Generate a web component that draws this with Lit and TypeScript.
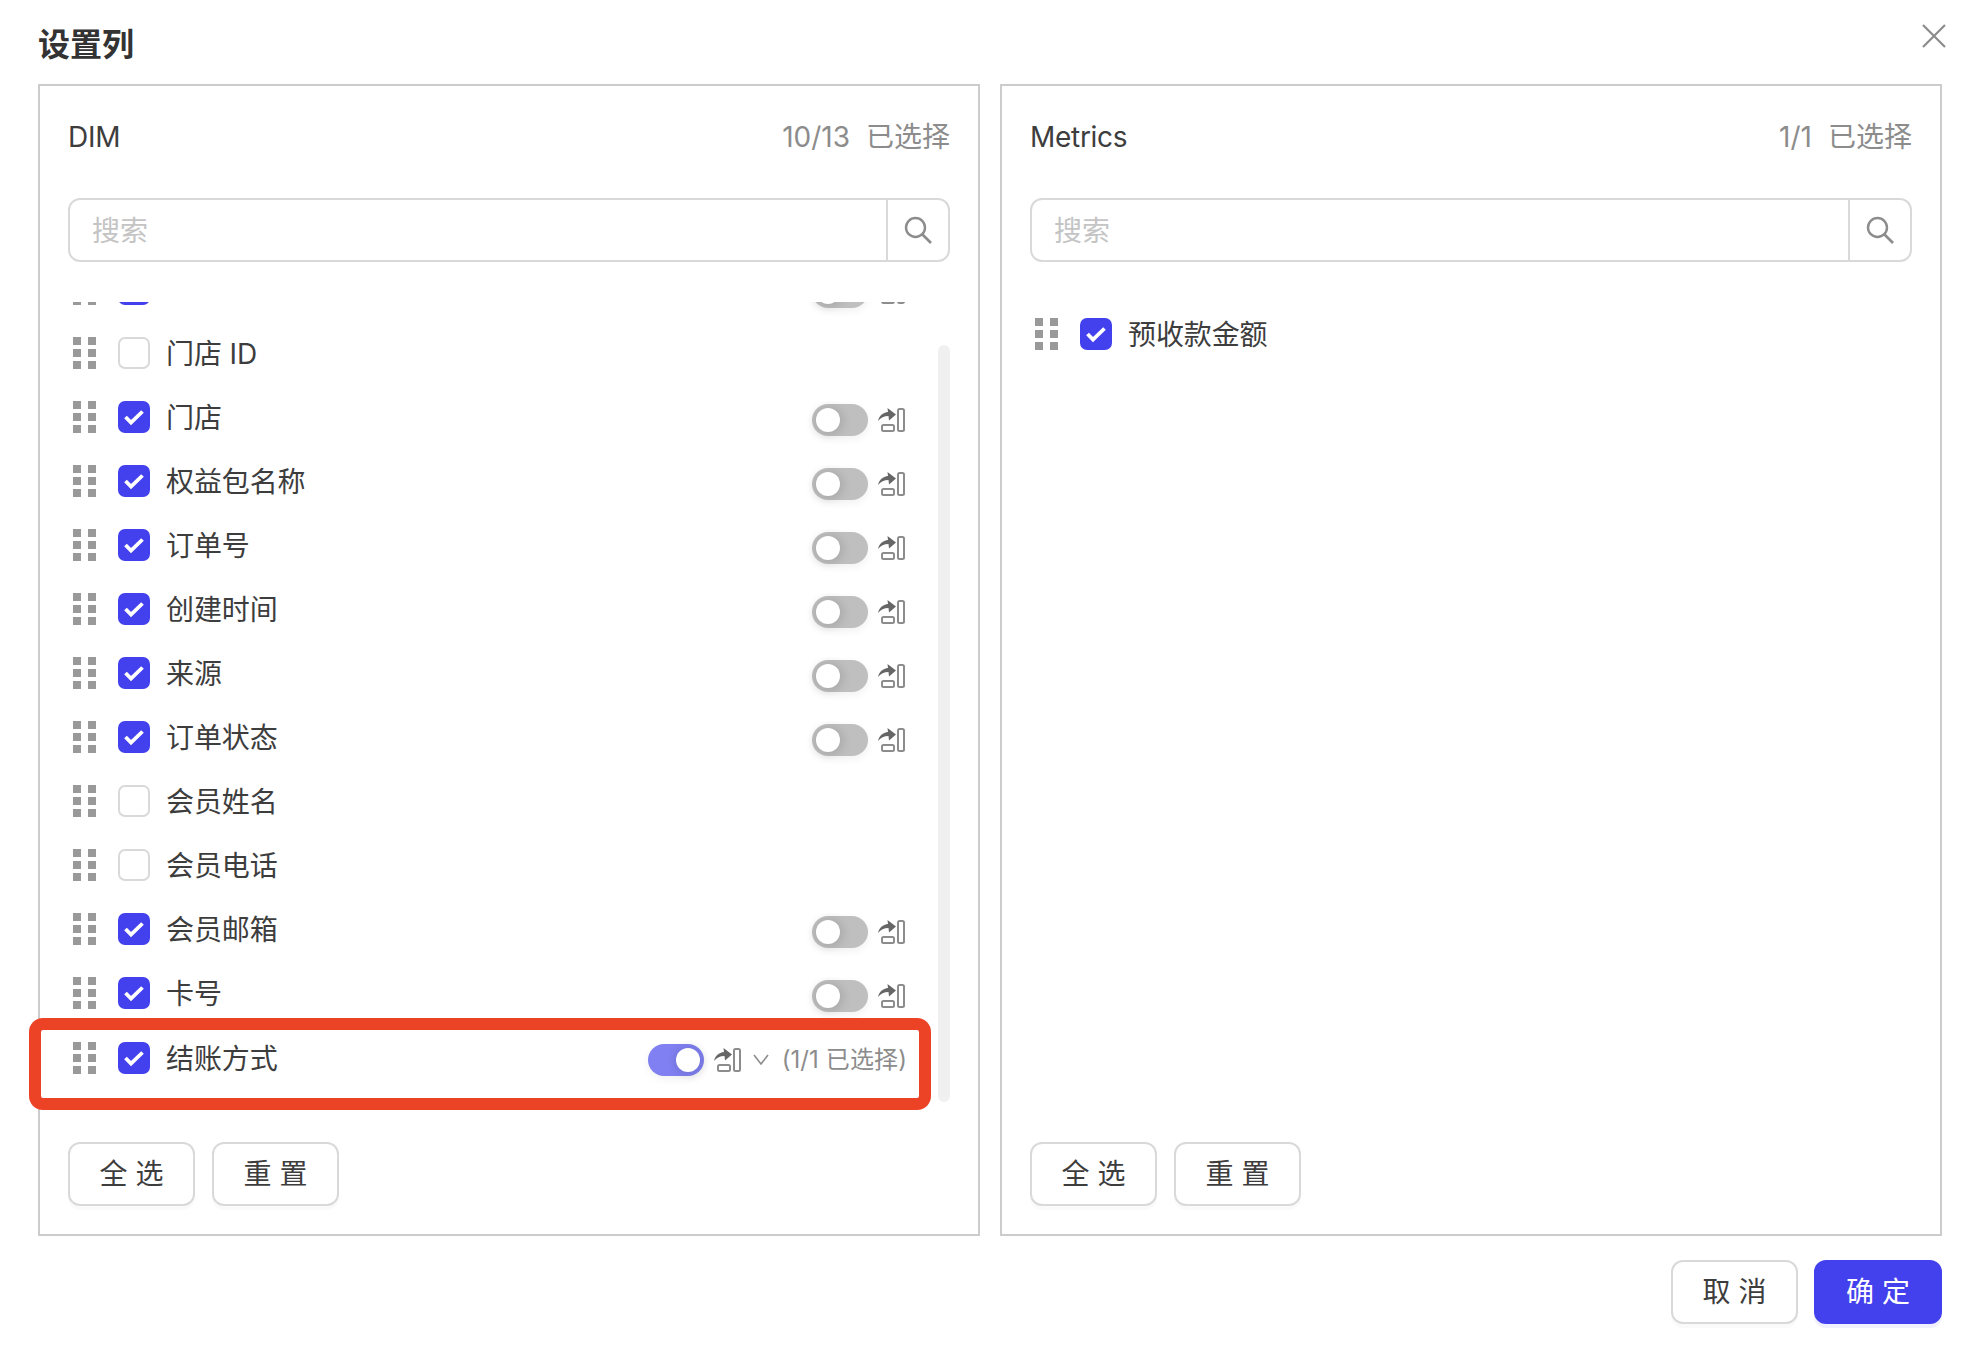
import { LitElement, html, css, svg } from "lit";
import { customElement } from "lit/decorators.js";

type Row = { label: string; checked: boolean; toggle?: boolean; on?: boolean; note?: string };

const DIM: Row[] = [
  { label: "", checked: true, toggle: true },
  { label: "门店 ID", checked: false },
  { label: "门店", checked: true, toggle: true },
  { label: "权益包名称", checked: true, toggle: true },
  { label: "订单号", checked: true, toggle: true },
  { label: "创建时间", checked: true, toggle: true },
  { label: "来源", checked: true, toggle: true },
  { label: "订单状态", checked: true, toggle: true },
  { label: "会员姓名", checked: false },
  { label: "会员电话", checked: false },
  { label: "会员邮箱", checked: true, toggle: true },
  { label: "卡号", checked: true, toggle: true },
  { label: "结账方式", checked: true, toggle: true, on: true, note: "(1/1 已选择)" },
];
const METRICS: Row[] = [{ label: "预收款金额", checked: true }];

const pinIcon = svg`<svg class="pin" width="27" height="24" viewBox="0 0 27 24">
  <rect x="20" y="1" width="6" height="22" rx="1.5" fill="none" stroke="#8c8c8c" stroke-width="2"/>
  <rect x="4" y="17" width="12" height="6" rx="1.5" fill="none" stroke="#8c8c8c" stroke-width="2"/>
  <path d="M0 13C1 8 5 4.5 10 4L9.5 0L18 6.5L11 12.5L10.5 8C6 8 3 9.5 0 13Z" fill="#666"/>
</svg>`;

@customElement("app-root")
export class AppRoot extends LitElement {
  static styles = css`
    :host {
      display: block;
      width: 1972px;
      height: 1358px;
      background: #fff;
      font-family: Inter, "Noto Sans CJK SC", sans-serif;
      color: #3d3d3d;
      position: relative;
      overflow: hidden;
    }
    .modal { padding: 24px 30px 0 38px; display: flex; flex-direction: column; }
    .title { font-size: 32px; font-weight: 700; line-height: 40px; height: 39px; padding-top: 1px; margin-bottom: 20px; color: #333; }
    .close { position: absolute; left: 1922px; top: 24px; }
    .panels { display: flex; gap: 20px; }
    .panel {
      width: 942px; height: 1152px; box-sizing: border-box;
      border: 2px solid #cccccc; padding: 30px 28px 27px;
      display: flex; flex-direction: column;
    }
    .head { display: flex; justify-content: space-between; align-items: center; height: 40px; font-size: 28px; line-height: 40px; padding-top: 1px; }
    .name { letter-spacing: -0.3px; }
    .count { display: flex; gap: 16px; color: #8c8c8c; }
    .search {
      margin-top: 41px; height: 64px; box-sizing: border-box; flex: none;
      border: 2px solid #d9d9d9; border-radius: 12px; display: flex; align-items: stretch;
    }
    .ph { flex: 1; padding-left: 22px; font-size: 28px; line-height: 62px; color: #c4c4c4; }
    .sbtn { width: 62px; box-sizing: border-box; border-left: 2px solid #d9d9d9; display: flex; align-items: center; justify-content: center; }
    .body { margin-top: 40px; height: 800px; flex: none; display: flex; }
    .list { flex: 1; min-width: 0; overflow: hidden; }
    .scrolled { margin-top: -45px; }
    .track { width: 12px; flex: none; margin-top: 43px; background: #f0f0f0; border-radius: 6px; }
    .row { height: 64px; display: flex; align-items: center; padding: 0 33px 0 5px; font-size: 28px; }
    .row.noted { margin-top: 1px; }
    .grip { width: 23px; height: 32px; display: grid; grid-template-columns: 8px 8px; grid-auto-rows: 8px; justify-content: space-between; align-content: space-between; flex: none; }
    .grip i { background: #999; display: block; }
    .box { width: 32px; height: 32px; box-sizing: border-box; border-radius: 7px; margin-left: 22px; flex: none; display: flex; align-items: center; justify-content: center; }
    .box.on { background: #4340ed; }
    .box.off { border: 2px solid #d9d9d9; }
    .label { margin-left: 16px; padding-top: 2px; line-height: 40px; white-space: nowrap; letter-spacing: -0.1px; }
    .extra { margin-left: auto; display: flex; align-items: center; margin-top: 6px; }
    .noted .extra { margin-top: 3px; }
    .toggle { width: 56px; height: 32px; border-radius: 16px; background: #bfbfbf; position: relative; box-shadow: 0 3px 8px rgba(0,0,0,.06); flex: none; }
    .toggle::after { content: ""; position: absolute; left: 4px; top: 4px; width: 24px; height: 24px; border-radius: 50%; background: #fff; box-shadow: 1px 1px 8px 3px rgba(0,0,0,.10); }
    .toggle.on { background: #8080f2; }
    .toggle.on::after { left: 28px; }
    .pin { margin-left: 10px; display: block; flex: none; }
    .chev { margin-left: 12px; display: block; flex: none; }
    .note { margin-left: 13px; margin-right: -2px; font-size: 24px; line-height: 32px; color: #8c8c8c; white-space: nowrap; letter-spacing: 0.1px; }
    .actions { margin-top: 40px; display: flex; gap: 17px; }
    .btn {
      width: 127px; height: 64px; box-sizing: border-box; border: 2px solid #d9d9d9; border-radius: 12px;
      background: #fff; font-size: 28px; line-height: 40px; padding-bottom: 1px; display: flex; align-items: center; justify-content: center;
      box-shadow: 0 4px 0 rgba(0,0,0,.02); white-space: pre; color: #3d3d3d;
    }
    .foot { margin-top: 24px; display: flex; justify-content: flex-end; gap: 16px; }
    .btn.primary { background: #4340ed; border-color: #4340ed; color: #fff; box-shadow: 0 4px 0 rgba(67,64,237,.08); width: 128px; }
    .mark {
      position: absolute; left: 29px; top: 1018px; width: 902px; height: 92px; box-sizing: border-box;
      border: 12px solid #ec4226; border-radius: 14px; pointer-events: none;
    }
  `;

  private row(r: Row) {
    return html`<div class="row ${r.note ? "noted" : ""}">
      <div class="grip">${[0, 1, 2, 3, 4, 5].map(() => html`<i></i>`)}</div>
      <div class="box ${r.checked ? "on" : "off"}">
        ${r.checked
          ? html`<svg width="22" height="18" viewBox="0 0 22 18"><path d="M2.5 9L8 14.5L19.5 3.5" fill="none" stroke="#fff" stroke-width="3.8"/></svg>`
          : ""}
      </div>
      <div class="label">${r.label}</div>
      ${r.toggle
        ? html`<div class="extra">
            <div class="toggle ${r.on ? "on" : ""}"></div>
            ${pinIcon}
            ${r.note
              ? html`<svg class="chev" width="16" height="12" viewBox="0 0 16 12"><path d="M1 1L8 10L15 1" fill="none" stroke="#8c8c8c" stroke-width="1.6"/></svg>
                  <span class="note">${r.note}</span>`
              : ""}
          </div>`
        : ""}
    </div>`;
  }

  private panel(name: string, n: string, rows: Row[], scrolled: boolean) {
    return html`<section class="panel">
      <div class="head"><span class="name">${name}</span><span class="count"><span>${n}</span><span>已选择</span></span></div>
      <div class="search">
        <div class="ph">搜索</div>
        <div class="sbtn">
          <svg width="28" height="28" viewBox="0 0 28 28"><circle cx="11.5" cy="11.5" r="9.5" fill="none" stroke="#8c8c8c" stroke-width="2.4"/><path d="M18.5 18.5L27 27" stroke="#8c8c8c" stroke-width="2.6" fill="none"/></svg>
        </div>
      </div>
      <div class="body">
        <div class="list"><div class=${scrolled ? "scrolled" : ""}>${rows.map((r) => this.row(r))}</div></div>
        ${scrolled ? html`<div class="track"></div>` : ""}
      </div>
      <div class="actions"><div class="btn">全 选</div><div class="btn">重 置</div></div>
    </section>`;
  }

  render() {
    return html`<div class="modal">
        <div class="title">设置列</div>
        <svg class="close" width="24" height="24" viewBox="0 0 24 24"><path d="M1 1L23 23M23 1L1 23" stroke="#8c8c8c" stroke-width="2.2" fill="none"/></svg>
        <div class="panels">
          ${this.panel("DIM", "10/13", DIM, true)}
          ${this.panel("Metrics", "1/1", METRICS, false)}
        </div>
        <div class="foot"><div class="btn">取 消</div><div class="btn primary">确 定</div></div>
      </div>
      <div class="mark"></div>`;
  }
}
